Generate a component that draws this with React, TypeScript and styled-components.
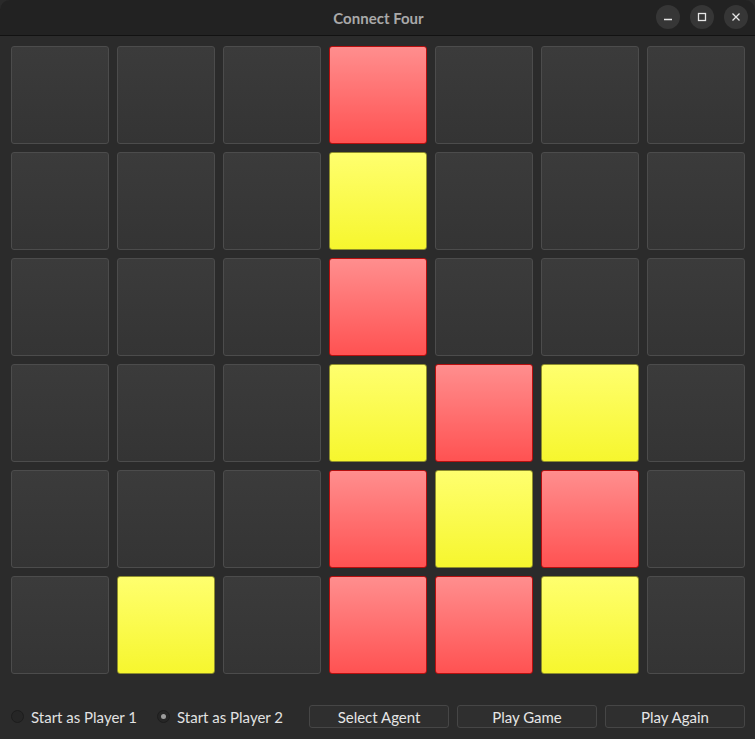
import React from 'react';
import styled, { createGlobalStyle } from 'styled-components';

const GlobalStyle = createGlobalStyle`
  html, body {
    margin: 0;
    padding: 0;
    background: #2a2a2a;
  }
  body {
    font-family: 'Lato', 'Liberation Sans', sans-serif;
  }
`;

const Window = styled.div`
  width: 755px;
  height: 739px;
  display: flex;
  flex-direction: column;
  background: #2b2b2b;
  border-radius: 10px 10px 0 0;
  overflow: hidden;
`;

const TitleBar = styled.div`
  height: 35px;
  flex-shrink: 0;
  background: #222222;
  border-bottom: 1px solid #121212;
  position: relative;
  display: flex;
  align-items: center;
  justify-content: center;
  .title {
    color: #a9a9a9;
    font-weight: bold;
    font-size: 15px;
    margin-left: 2px;
  }
`;

const WindowButtons = styled.div`
  position: absolute;
  right: 7px;
  top: 5px;
  display: flex;
  gap: 10px;
`;

const WindowButton = styled.div`
  width: 24px;
  height: 24px;
  border-radius: 50%;
  background: #363636;
  display: flex;
  align-items: center;
  justify-content: center;
`;

const Content = styled.div`
  flex: 1;
  display: flex;
  flex-direction: column;
  padding: 10px 10px 0 11px;
`;

const Board = styled.div`
  display: grid;
  grid-template-columns: repeat(7, 98px);
  grid-auto-rows: 98px;
  gap: 8px;
`;

type Piece = 0 | 1 | 2;

const Cell = styled.div<{ $piece: Piece }>`
  box-sizing: border-box;
  border-radius: 3px;
  border: 1px solid
    ${(p) => (p.$piece === 1 ? '#b80f0f' : p.$piece === 2 ? '#8e8e2c' : '#4c4c4c')};
  background: ${(p) =>
    p.$piece === 1
      ? 'linear-gradient(to bottom, #ff8e8e, #ff5252)'
      : p.$piece === 2
      ? 'linear-gradient(to bottom, #ffff6e, #f6f62e)'
      : 'linear-gradient(to bottom, #3b3b3b, #343434)'};
`;

const Controls = styled.div`
  margin-top: 31px;
  display: flex;
  align-items: center;
  gap: 8px;
`;

const RadioGroup = styled.div`
  flex: 1;
  display: flex;
  align-items: center;
`;

const RadioOption = styled.label<{ $gap: number }>`
  display: flex;
  align-items: center;
  color: #e2e2e2;
  font-size: 15px;
  margin-right: ${(p) => p.$gap}px;
  .dot {
    width: 13px;
    height: 13px;
    box-sizing: border-box;
    border-radius: 50%;
    background: #262626;
    border: 1px solid #1d1d1d;
    margin-right: 7px;
    display: flex;
    align-items: center;
    justify-content: center;
  }
  .dot i {
    width: 5px;
    height: 5px;
    border-radius: 50%;
    background: #9c9c9c;
  }
`;

const Button = styled.button`
  width: 140px;
  height: 23px;
  box-sizing: border-box;
  background: #2f2f2f;
  border: 1px solid #464646;
  border-radius: 3px;
  color: #e6e6e6;
  font-family: 'Lato', 'Liberation Sans', sans-serif;
  font-size: 15px;
  padding: 0;
`;

const board: Piece[][] = [
  [0, 0, 0, 1, 0, 0, 0],
  [0, 0, 0, 2, 0, 0, 0],
  [0, 0, 0, 1, 0, 0, 0],
  [0, 0, 0, 2, 1, 2, 0],
  [0, 0, 0, 1, 2, 1, 0],
  [0, 2, 0, 1, 1, 2, 0],
];

const App = () => {
  return (
    <Window>
      <GlobalStyle />
      <TitleBar>
        <span className="title">Connect Four</span>
        <WindowButtons>
          <WindowButton>
            <svg width="10" height="10" viewBox="0 0 10 10">
              <line x1="1" y1="7.5" x2="9" y2="7.5" stroke="#e6e6e6" strokeWidth="1.3" />
            </svg>
          </WindowButton>
          <WindowButton>
            <svg width="10" height="10" viewBox="0 0 10 10">
              <rect x="1.5" y="1.5" width="7" height="7" fill="none" stroke="#e6e6e6" strokeWidth="1.3" />
            </svg>
          </WindowButton>
          <WindowButton>
            <svg width="10" height="10" viewBox="0 0 10 10">
              <path d="M1.5 1.5 L8.5 8.5 M8.5 1.5 L1.5 8.5" stroke="#e6e6e6" strokeWidth="1.3" />
            </svg>
          </WindowButton>
        </WindowButtons>
      </TitleBar>
      <Content>
        <Board>
          {board.flatMap((row, r) =>
            row.map((piece, c) => <Cell key={`${r}-${c}`} $piece={piece} />)
          )}
        </Board>
        <Controls>
          <RadioGroup>
            <RadioOption $gap={20}>
              <span className="dot" />
              Start as Player 1
            </RadioOption>
            <RadioOption $gap={0}>
              <span className="dot"><i /></span>
              Start as Player 2
            </RadioOption>
          </RadioGroup>
          <Button>Select Agent</Button>
          <Button>Play Game</Button>
          <Button>Play Again</Button>
        </Controls>
      </Content>
    </Window>
  );
};

export default App;
